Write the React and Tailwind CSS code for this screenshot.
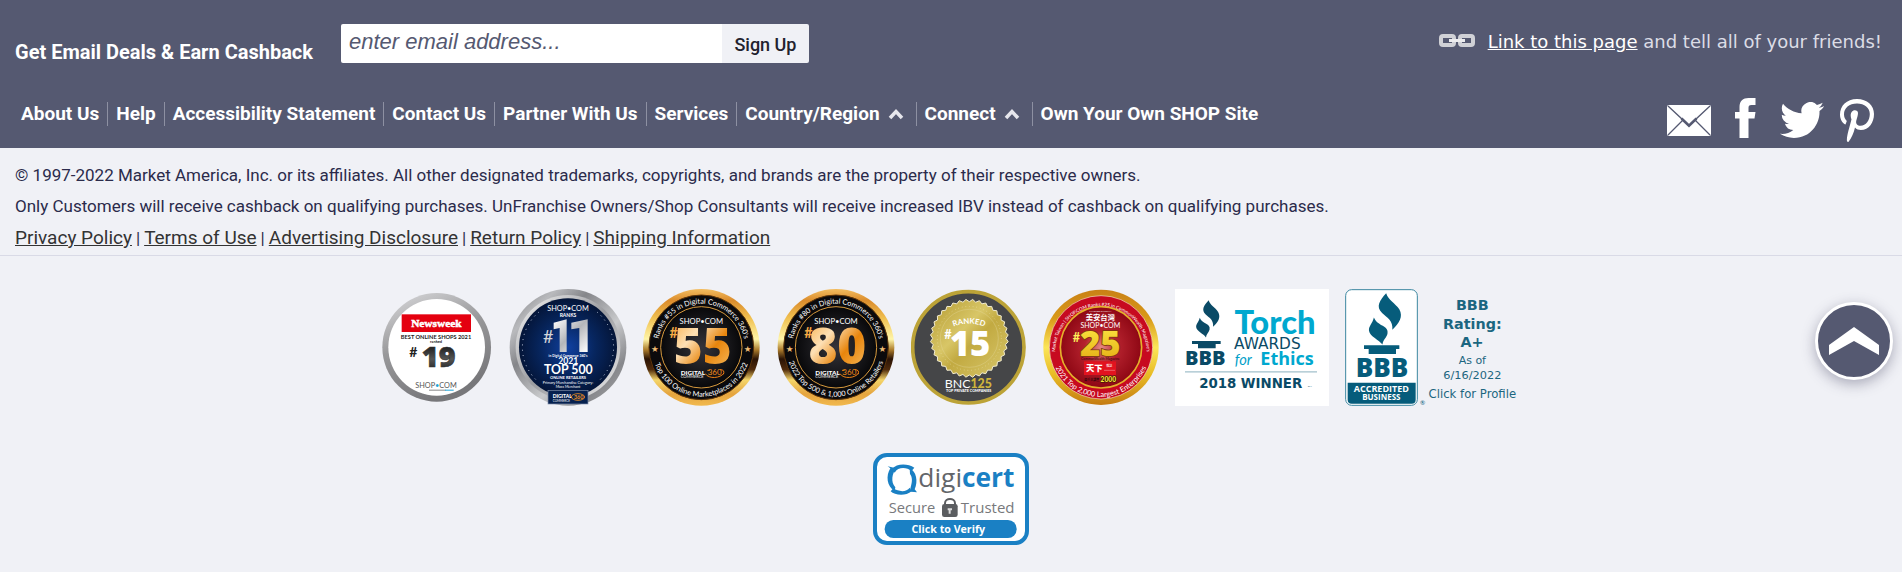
import React from 'react';

const navItems = [
  { label: 'About Us' },
  { label: 'Help' },
  { label: 'Accessibility Statement' },
  { label: 'Contact Us' },
  { label: 'Partner With Us' },
  { label: 'Services' },
  { label: 'Country/Region', menu: true },
  { label: 'Connect', menu: true },
  { label: 'Own Your Own SHOP Site' },
];

const legalLinks = ['Privacy Policy', 'Terms of Use', 'Advertising Disclosure', 'Return Policy', 'Shipping Information'];

const lato = 'Lato, sans-serif';
const openSans = "'Open Sans', sans-serif";
const dejaVu = "'DejaVu Sans', sans-serif";
const chinese = "'Noto Sans CJK TC', sans-serif";

function T({ x, y, s, f, w, font, a, children, ...rest }) {
  return (
    <text x={x} y={y} fontSize={s} fill={f || '#fff'} fontWeight={w || 400} fontFamily={font || lato} textAnchor={a || 'middle'} {...rest}>
      {children}
    </text>
  );
}

function Newsweek() {
  return (
    <svg role="img" aria-label="Newsweek best online shops" className="h-[118px] w-[112px]" viewBox="30 24 336 354">
      <defs>
        <linearGradient id="nwRing" x1="0" y1="0" x2="0.4" y2="1">
          <stop offset="0" stopColor="#dcdcde" />
          <stop offset="0.5" stopColor="#98989a" />
          <stop offset="1" stopColor="#77777a" />
        </linearGradient>
        <linearGradient id="nwNum" x1="0" y1="0" x2="0" y2="1">
          <stop offset="0.2" stopColor="#111" />
          <stop offset="0.6" stopColor="#555" />
          <stop offset="1" stopColor="#111" />
        </linearGradient>
      </defs>
      <circle cx="197" cy="199" r="163" fill="url(#nwRing)" />
      <circle cx="197" cy="199" r="145" fill="#fff" />
      <rect x="92" y="100" width="208" height="53" fill="#e4000f" />
      <T x={196} y={137} s={34} w={900} font="'Liberation Serif', serif" stroke="#fff" strokeWidth="1.5">Newsweek</T>
      <T x={195} y={173} s={17} f="#222" w={700}>BEST ONLINE SHOPS 2021</T>
      <T x={195} y={187} s={12} f="#222" w={700}>ranked</T>
      <T x={127} y={228} s={42} f="#222" w={700}>#</T>
      <T x={203} y={257} s={86} f="url(#nwNum)" w={800} font={openSans} stroke="#333" strokeWidth="2">19</T>
      <T x={195} y={321} s={22} f="#555">SHOP<tspan fill="#1aa3d8">•</tspan>COM</T>
      <rect x="174" y="326" width="50" height="3" fill="#888" />
      <rect x="222" y="326" width="26" height="3" fill="#1aa3d8" />
    </svg>
  );
}

function TopFiveHundred() {
  return (
    <svg role="img" aria-label="Top 500 online retailers" className="h-[118px] w-[118px]" viewBox="418 24 354 354">
      <defs>
        <linearGradient id="tfRing" x1="0" y1="0" x2="1" y2="1">
          <stop offset="0" stopColor="#77787c" />
          <stop offset="0.2" stopColor="#b9babd" />
          <stop offset="0.35" stopColor="#85868a" />
          <stop offset="0.6" stopColor="#c9cacc" />
          <stop offset="0.8" stopColor="#87888c" />
          <stop offset="1" stopColor="#aaa" />
        </linearGradient>
        <linearGradient id="tfInner" x1="0" y1="0" x2="1" y2="1">
          <stop offset="0" stopColor="#f6f6f6" />
          <stop offset="0.5" stopColor="#9b9ca0" />
          <stop offset="1" stopColor="#eee" />
        </linearGradient>
        <radialGradient id="tfBlue">
          <stop offset="0" stopColor="#1040a0" />
          <stop offset="0.55" stopColor="#07265f" />
          <stop offset="1" stopColor="#041538" />
        </radialGradient>
        <linearGradient id="tfNum" x1="0" y1="0" x2="1" y2="1">
          <stop offset="0" stopColor="#fff" />
          <stop offset="0.5" stopColor="#b4b6ba" />
          <stop offset="1" stopColor="#fff" />
        </linearGradient>
      </defs>
      <circle cx="595" cy="199" r="175" fill="url(#tfRing)" />
      <circle cx="595" cy="199" r="157" fill="url(#tfInner)" />
      <circle cx="595" cy="199" r="147" fill="url(#tfBlue)" />
      <path d="M508 93 A137 137 0 0 0 503 300 M682 93 A137 137 0 0 1 687 300" fill="none" stroke="#c3cde0" strokeWidth="3" strokeDasharray="3 13" />
      <T x={595} y={90} s={22}>SHOP•COM</T>
      <T x={595} y={107} s={15} w={700}>RANKS</T>
      <T x={536} y={187} s={54} f="#d5d6d9">#</T>
      <path d="M552 125 L591 115 V213 H570 V141 L552 145Z M605 125 L654 115 V213 H629 V141 L605 145Z" fill="url(#tfNum)" />
      <T x={595} y={227} s={10} w={700}>in Digital Commerce 360's</T>
      <T x={596} y={249} s={26} w={700}>2021</T>
      <T x={596} y={280} s={37} w={700}>TOP 500</T>
      <T x={595} y={295} s={12} w={700}>ONLINE RETAILERS</T>
      <T x={595} y={308} s={11}>Primary Merchandise Category:</T>
      <T x={595} y={320} s={11}>Mass Merchant</T>
      <rect x="535" y="328" width="120" height="41" fill="#06204e" stroke="#8290aa" strokeWidth="2" />
      <T x={549} y={351} s={15} w={900} a="start">DIGITAL</T>
      <T x={549} y={362} s={9} a="start">COMMERCE</T>
      <T x={627} y={354} s={16} f="#f09020" w={700}>360</T>
      <ellipse cx="625" cy="348" rx="20" ry="10" fill="none" stroke="#f09020" strokeWidth="2.5" />
    </svg>
  );
}

function GoldBadge({ id, left, cx, num, top, bottom }) {
  return (
    <svg role="img" aria-label={'Digital Commerce 360 rank ' + num} className="h-[118px] w-[118px]" viewBox={left + ' 24 354 354'}>
      <defs>
        <linearGradient id={id + 'r'} x1="0" y1="0" x2="0" y2="1">
          <stop offset="0" stopColor="#f3bd60" />
          <stop offset="0.1" stopColor="#db8c2c" />
          <stop offset="0.25" stopColor="#f0c050" />
          <stop offset="0.43" stopColor="#fff5a8" />
          <stop offset="0.52" stopColor="#ad7d2d" />
          <stop offset="0.6" stopColor="#2a1305" />
          <stop offset="0.69" stopColor="#4f2b0c" />
          <stop offset="0.78" stopColor="#f4d56a" />
          <stop offset="0.9" stopColor="#e5a43e" />
          <stop offset="1" stopColor="#f1b94e" />
        </linearGradient>
        <linearGradient id={id + 'n'} x1="0" y1="0" x2="1" y2="1">
          <stop offset="0" stopColor="#f7a433" />
          <stop offset="0.35" stopColor="#fde0b5" />
          <stop offset="0.62" stopColor="#e8850c" />
          <stop offset="1" stopColor="#f9c46d" />
        </linearGradient>
        <radialGradient id={id + 'b'}>
          <stop offset="0" stopColor="#35343a" />
          <stop offset="1" stopColor="#08080a" />
        </radialGradient>
        <path id={id + 't'} d={`M${cx - 131} 199 A131 131 0 0 1 ${cx + 131} 199`} />
        <path id={id + 'u'} d={`M${cx - 148} 199 A148 148 0 0 0 ${cx + 148} 199`} />
      </defs>
      <circle cx={cx} cy="199" r="175" fill={`url(#${id}r)`} />
      <circle cx={cx} cy="199" r="157" fill="#0b0a0c" stroke="#5d3409" strokeWidth="3" />
      <circle cx={cx} cy="199" r="122" fill={`url(#${id}b)`} stroke="#d79a3e" strokeWidth="3" />
      <text fontSize="22" fill="#fff" fontFamily={lato} textAnchor="middle">
        <textPath href={`#${id}t`} startOffset="50%">{top}</textPath>
      </text>
      <text fontSize="22" fill="#fff" fontFamily={lato} textAnchor="middle">
        <textPath href={`#${id}u`} startOffset="50%">{bottom}</textPath>
      </text>
      <T x={cx - 139} y={214} s={26} f="#f0bd74" font={dejaVu}>★</T>
      <T x={cx + 139} y={214} s={26} f="#f0bd74" font={dejaVu}>★</T>
      <T x={cx} y={129} s={23}>SHOP•COM</T>
      <T x={cx - 83} y={172} s={43} f="#f6aa45" w={700}>#</T>
      <T x={cx + 4} y={249} s={148} f={`url(#${id}n)`} w={800} font={openSans}>{num}</T>
      <T x={cx - 62} y={281} s={19} w={900} a="start">DIGITAL</T>
      <T x={cx - 62} y={292} s={12} a="start">COMMERCE</T>
      <T x={cx + 40} y={282} s={24} f="#f08a18">360</T>
      <path d={`M${cx + 12} 278 C${cx + 22} 295 ${cx + 58} 292 ${cx + 68} 276 M${cx + 18} 268 H${cx + 26} M${cx + 56} 266 Q${cx + 72} 266 ${cx + 66} 280`} fill="none" stroke="#ee8112" strokeWidth="3" />
    </svg>
  );
}

const scallop = Array.from({ length: 72 }, (_, i) => {
  const a = (i * Math.PI) / 36;
  const r = i % 2 ? 117 : 110;
  return (202 + r * Math.cos(a)).toFixed(1) + ',' + (172 + r * Math.sin(a)).toFixed(1);
}).join(' ');

function BncBadge() {
  return (
    <svg role="img" aria-label="BNC 125 top private companies" className="h-[118px] w-[116px]" viewBox="27 24 348 354">
      <defs>
        <linearGradient id="bncSeal" x1="0" y1="0" x2="1" y2="1">
          <stop offset="0" stopColor="#b49a30" />
          <stop offset="0.4" stopColor="#d8c667" />
          <stop offset="0.55" stopColor="#c2aa41" />
          <stop offset="1" stopColor="#d9c96e" />
        </linearGradient>
        <path id="bncArc" d="M141 143 Q201 113 261 143" />
      </defs>
      <circle cx="199" cy="199" r="167" fill="#454648" stroke="#bca337" strokeWidth="11" />
      <polygon points={scallop} fill="url(#bncSeal)" stroke="#f2ecd0" strokeWidth="3" strokeLinejoin="round" />
      <circle cx="202" cy="172" r="87" fill="none" stroke="#e6dba0" strokeWidth="1" />
      <circle cx="202" cy="172" r="96" fill="none" stroke="#eee5b4" strokeWidth="2" strokeDasharray="2 9" />
      <text fontSize="23" fontWeight="700" fill="#fff" fontFamily={lato} textAnchor="middle">
        <textPath href="#bncArc" startOffset="50%">RANKED</textPath>
      </text>
      <T x={138} y={174} s={38} w={700}>#</T>
      <T x={204} y={225} s={104} w={800} font={openSans}>15</T>
      <T x={199} y={320} s={37}>BNC<tspan fill="#d0b53c" fontWeight="900">125</tspan></T>
      <T x={200} y={332} s={11} w={900}>TOP PRIVATE COMPANIES</T>
    </svg>
  );
}

function RedBadge() {
  return (
    <svg role="img" aria-label="Top 2,000 largest enterprises" className="h-[118px] w-[116px]" viewBox="426 24 348 354">
      <defs>
        <linearGradient id="redRing" x1="0" y1="0" x2="0" y2="1">
          <stop offset="0" stopColor="#c98116" />
          <stop offset="0.25" stopColor="#d99a18" />
          <stop offset="0.5" stopColor="#fbe558" />
          <stop offset="0.75" stopColor="#e7b923" />
          <stop offset="1" stopColor="#c47a12" />
        </linearGradient>
        <radialGradient id="redFill">
          <stop offset="0" stopColor="#e58a83" />
          <stop offset="0.4" stopColor="#b5222e" />
          <stop offset="1" stopColor="#8e0714" />
        </radialGradient>
        <linearGradient id="redNum" x1="0" y1="0" x2="0" y2="1">
          <stop offset="0" stopColor="#ffed48" />
          <stop offset="1" stopColor="#e2a910" />
        </linearGradient>
        <path id="redTop" d="M463 212 A137 137 0 1 1 737 212" />
        <path id="redBot" d="M451 199 A149 149 0 0 0 749 199" />
      </defs>
      <circle cx="600" cy="199" r="173" fill="url(#redRing)" />
      <circle cx="600" cy="199" r="155" fill="#c70a20" stroke="#f2e6c2" strokeWidth="2" />
      <circle cx="600" cy="199" r="122" fill="url(#redFill)" stroke="#e4b02c" strokeWidth="5" />
      <text fontSize="14" fill="#fff" fontFamily={lato} textAnchor="middle">
        <textPath href="#redTop" startOffset="50%">Market Taiwan | SHOP.COM Ranks #25 in CommonWealth Magazine's</textPath>
      </text>
      <text fontSize="22" fill="#fff" fontFamily={lato} textAnchor="middle">
        <textPath href="#redBot" startOffset="50%">2021 Top 2,000 Largest Enterprises</textPath>
      </text>
      <T x={598} y={93} s={8}>MARKET TAIWAN</T>
      <T x={598} y={117} s={22} w={700} font={chinese}>美安台灣</T>
      <T x={598} y={141} s={21}>SHOP•COM</T>
      <T x={526} y={182} s={38} f="#fff05a" w={700}>#</T>
      <T x={598} y={225} s={104} f="url(#redNum)" w={800} font={openSans} stroke="#7a3a0c" strokeWidth="5" paintOrder="stroke">25</T>
      <T x={598} y={238} s={10} f="#2c0609">CommonWealth Magazine</T>
      <rect x="549" y="241" width="96" height="41" fill="#e2131f" />
      <T x={580} y={271} s={25} w={900} font={chinese}>天下</T>
      <T x={625} y={259} s={9} font={chinese}>雜誌</T>
      <path d="M609 268 H642" stroke="#fff" strokeWidth="1" />
      <T x={572} y={301} s={9} f="#26070a" w={700} font={chinese}>兩千大調查</T>
      <T x={622} y={303} s={20} f="#ffe53b" w={900} stroke="#2a1a00" strokeWidth="3" paintOrder="stroke">2000</T>
    </svg>
  );
}

function Flame({ transform }) {
  return (
    <g transform={transform}>
      <path d="M46 0 C51 17 68 24 78 39 C88 57 78 73 61 89 C63 66 49 60 36 48 C20 33 30 17 46 0Z" />
      <path d="M16 59 C25 81 54 78 49 99 C46 109 38 113 37 125 C29 113 6 105 4 91 C3 80 12 75 16 59Z" />
    </g>
  );
}

function Torch() {
  return (
    <svg role="img" aria-label="BBB Torch Awards for Ethics 2018 winner" className="h-[117px] w-[154px]" viewBox="27 24 462 351">
      <rect x="27" y="24" width="462" height="351" fill="#fff" />
      <g fill="#0a4a66">
        <Flame transform="translate(87 58) scale(0.89)" />
        <path d="M78 180 H164 V189 H149 V202 H96 V189 H78Z" />
      </g>
      <T x={118} y={253} s={60} f="#0a4a66" w={800} font={openSans}>BBB</T>
      <T x={327} y={160} s={98} f="#00a8cf" w={900}>Torch</T>
      <T x={204} y={204} s={46} f="#0a4a66" a="start" font={dejaVu}>AWARDS</T>
      <T x={206} y={251} s={44} f="#00a0c8" a="start" fontStyle="italic">for</T>
      <T x={283} y={253} s={54} f="#00a8cf" w={700} a="start" font={openSans}>Ethics</T>
      <rect x="57" y="270" width="396" height="5" fill="#b9d0d8" />
      <T x={254} y={320} s={40} f="#0a4a66" w={700} font={dejaVu}>2018 WINNER</T>
      <T x={431} y={319} s={8} f="#0a4a66">SM</T>
    </svg>
  );
}

function Accredited() {
  return (
    <svg role="img" aria-label="BBB accredited business" className="h-[118px] w-[177px]" viewBox="537 24 531 354">
      <rect x="539" y="26" width="215" height="347" rx="18" fill="#fff" stroke="#3c87a0" strokeWidth="3" />
      <path d="M545 305 H749 V356 Q749 368 737 368 H557 Q545 368 545 356Z" fill="#065c7b" />
      <g fill="#065c7b">
        <Flame transform="translate(604 37) scale(1.23)" />
        <path d="M594 193 H700 V204 H690 V219 H608 V204 H594Z" />
      </g>
      <T x={648} y={287} s={78} f="#065c7b" w={800} font={openSans}>BBB</T>
      <T x={646} y={333} s={27} w={700} font={openSans}>ACCREDITED</T>
      <T x={646} y={357} s={24} w={700} font={openSans}>BUSINESS</T>
      <T x={770} y={372} s={19} f="#065c7b">®</T>
      <T x={919} y={87} s={43} f="#1b6680" w={700} font={dejaVu}>BBB</T>
      <T x={919} y={143} s={43} f="#1b6680" w={700} font={dejaVu}>Rating:</T>
      <T x={918} y={199} s={43} f="#1b6680" w={700} font={dejaVu}>A+</T>
      <T x={919} y={250} s={33} f="#1b6680" font={dejaVu}>As of</T>
      <T x={919} y={293} s={34} f="#1b6680" font={dejaVu}>6/16/2022</T>
      <T x={919} y={352} s={35} f="#1b6680" font={dejaVu}>Click for Profile</T>
    </svg>
  );
}

function Digicert() {
  return (
    <svg role="img" aria-label="DigiCert secure and trusted" className="h-[92px] w-[156px]" viewBox="36 36 468 276">
      <rect x="42" y="42" width="456" height="264" rx="36" fill="#fff" stroke="#1a80c4" strokeWidth="12" />
      <g fill="#1a80c4">
        <path d="M93 83 C107 67 140 66 160 80 L151 91 C138 78 111 77 101 95 Z" />
        <path d="M146 82 C166 91 172 121 161 145 L168 154 L150 152 C142 145 162 119 147 99 Z" />
        <path d="M152 151 C133 167 101 163 89 151 L97 142 C113 153 137 154 146 140 Z" />
        <path d="M101 150 C77 136 74 105 88 82 L80 76 L105 82 C94 98 88 122 103 139 Z" />
      </g>
      <T x={172} y={139} s={79} f="#63666a" a="start" font={openSans}>digi<tspan fill="#1a80c4" fontWeight="700">cert</tspan></T>
      <T x={153} y={216} s={44} f="#77797c" font={openSans}>Secure</T>
      <T x={380} y={216} s={45} f="#77797c" font={openSans}>Trusted</T>
      <path d="M252 192 V187 C252 170 282 170 282 187 V192" fill="none" stroke="#5b5d60" strokeWidth="6" />
      <rect x="243" y="189" width="47" height="39" rx="7" fill="#5b5d60" />
      <path d="M260 202 H273 V208 H269 V218 H263 V208 H260Z" fill="#ddd" />
      <rect x="71" y="237" width="396" height="54" rx="26" fill="#1a80c4" />
      <T x={262} y={276} s={32} w={700} font={openSans}>Click to Verify</T>
    </svg>
  );
}

function ChainIcon() {
  return (
    <svg aria-hidden="true" className="h-4 w-[38px]" viewBox="0 0 38 16">
      <g fill="none" stroke="#d0d1d6" strokeWidth="4">
        <rect x="3" y="2" width="13" height="9" rx="2" />
        <rect x="22" y="2" width="13" height="9" rx="2" />
        <path d="M11 6.500 H27" stroke="#ececee" strokeWidth="3" />
      </g>
    </svg>
  );
}

export default function App() {
  return (
    <footer className="min-h-screen bg-[#f0f1f6] font-['Roboto',sans-serif] text-[#2b2b4b]">
      <div className="h-[148px] bg-[#555971] text-white">
        <div className="flex items-start justify-between pt-6 pr-5 pl-[15px]">
          <form className="flex" onSubmit={(e) => e.preventDefault()}>
            <label htmlFor="email" className="mt-4 mr-7 text-[20px] leading-6 font-bold">Get Email Deals &amp; Earn Cashback</label>
            <input
              id="email"
              type="email"
              placeholder="enter email address..."
              className="h-[39px] w-[381px] rounded-l-xs bg-white px-2 pb-1 font-['Liberation_Sans',sans-serif] text-[22px] text-[#555971] italic outline-none placeholder:text-[#555971]"
            />
            <button type="submit" className="h-[39px] w-[87px] rounded-r-xs bg-[#f0f1f6] pt-0.5 text-[18px] font-medium text-[#22222e]">Sign Up</button>
          </form>
          <p className="mt-1 flex items-center font-['DejaVu_Sans',sans-serif] text-[18px] leading-7 text-[#dcdde6]">
            <ChainIcon />
            <span className="ml-3"><a href="#link" className="text-white underline">Link to this page</a> and tell all of your friends!</span>
          </p>
        </div>
        <div className="flex items-start justify-between pr-[27px] pl-[13px]">
          <nav aria-label="Footer" className="mt-[38px] flex">
            {navItems.map((item, i) => (
              <a
                key={item.label}
                href="#nav"
                className={'flex h-6 items-center px-2 text-[19px] leading-6 font-bold whitespace-nowrap ' + (i ? 'border-l border-[#8d90a2]' : '')}
              >
                {item.label}
                {item.menu && (
                  <svg aria-hidden="true" className="mr-1 ml-2 h-3 w-4" viewBox="0 0 16 12">
                    <path d="M2 10 L8 3.500 L14 10" fill="none" stroke="#e6e6ec" strokeWidth="3.500" />
                  </svg>
                )}
              </a>
            ))}
          </nav>
          <div className="mt-[34px] flex items-center">
            <a href="#mail" aria-label="Email" className="mr-6">
              <svg className="h-[31px] w-[44px]" viewBox="0 0 44 31">
                <rect x="0" y="0" width="44" height="31" rx="2" fill="#fff" />
                <path d="M1 1 L22 20.500 L43 1 M1 30 L16 15 M43 30 L28 15" fill="none" stroke="#555971" strokeWidth="1.300" />
                <path d="M14.500 13.500 L22 20.800 L29.500 13.500" fill="none" stroke="#555971" strokeWidth="2.600" />
              </svg>
            </a>
            <a href="#facebook" aria-label="Facebook" className="mr-6 mb-1">
              <svg className="h-10 w-[21px]" viewBox="0 0 21 40">
                <path d="M4.500 40 V20.500 H0 V14 H4.500 V9 C4.500 3 8 0 13.500 0 H20.500 V7 H16.500 C14 7 13.500 8 13.500 10 V14 H20.500 L19.500 20.500 H13.500 V40Z" fill="#fff" />
              </svg>
            </a>
            <a href="#twitter" aria-label="Twitter" className="mr-4">
              <svg className="h-[36px] w-[44px]" viewBox="0 2.200 24 19.600" preserveAspectRatio="none">
                <path fill="#fff" d="M23.953 4.570a10 10 0 01-2.825.775 4.958 4.958 0 002.163-2.723c-.951.555-2.005.959-3.127 1.184a4.920 4.920 0 00-8.384 4.482C7.690 8.095 4.067 6.130 1.640 3.162a4.822 4.822 0 00-.666 2.475c0 1.710.870 3.213 2.188 4.096a4.904 4.904 0 01-2.228-.616v.060a4.923 4.923 0 003.946 4.827 4.996 4.996 0 01-2.212.085 4.936 4.936 0 004.604 3.417 9.867 9.867 0 01-6.102 2.105c-.390 0-.779-.023-1.170-.067a13.995 13.995 0 007.557 2.209c9.053 0 13.998-7.496 13.998-13.985 0-.210 0-.420-.015-.630A9.935 9.935 0 0024 4.590z" />
              </svg>
            </a>
            <a href="#pinterest" aria-label="Pinterest">
              <svg className="h-[43px] w-[35px]" viewBox="0 0 35 43">
                <path fill="#fff" d="M17 0 C6.500 0 0 7 0 15.500 C0 20 2.200 24.300 5.500 25.600 L6.800 22 C5 20.400 4 18 4 15.300 C4 9 9.200 4.400 17 4.400 C24.500 4.400 29.800 8.800 29.800 15 C29.800 21.500 26 26.800 20.500 26.800 C17.500 26.800 15.700 24.700 16.200 22 C17 18.800 18 16.500 18 14 C18 10 10.700 9.800 10.700 16.500 C10.700 18.800 11.500 20.200 11.500 20.200 C8.200 33 6.500 37.500 7 42.500 L8.400 43 C11.800 38.800 13.500 34.500 15 28.600 C16.500 30.500 18.700 31 20.800 31 C29 31 34 23.500 34 15 C34 6.500 27.200 0 17 0Z" />
              </svg>
            </a>
          </div>
        </div>
      </div>

      <div className="border-b border-[#d9dae6] px-[15px] pt-[11px] pb-px">
        <p className="text-[17px] leading-8">© 1997-2022 Market America, Inc. or its affiliates. All other designated trademarks, copyrights, and brands are the property of their respective owners.</p>
        <p className="text-[17px] leading-[31px]">Only Customers will receive cashback on qualifying purchases. UnFranchise Owners/Shop Consultants will receive increased IBV instead of cashback on qualifying purchases.</p>
        <p className="flex items-baseline gap-1 text-[17px] leading-8">
          {legalLinks.map((label, i) => (
            <React.Fragment key={label}>
              {i > 0 && <span>|</span>}
              <a href="#legal" className="text-[19px] text-[#333] underline">{label}</a>
            </React.Fragment>
          ))}
        </p>
      </div>

      <div className="flex flex-wrap justify-center gap-4 pt-[33px]">
        <Newsweek />
        <TopFiveHundred />
        <GoldBadge id="g55" left={24} cx={199} num="55" top="Ranks #55 in Digital Commerce 360's" bottom="Top 100 Online Marketplaces in 2022" />
        <GoldBadge id="g80" left={420} cx={597} num="80" top="Ranks #80 in Digital Commerce 360's" bottom="2022 Top 500 & 1,000 Online Retailers" />
        <BncBadge />
        <RedBadge />
        <Torch />
        <Accredited />
      </div>
      <div className="flex justify-center pt-[46px]">
        <Digicert />
      </div>

      <button type="button" aria-label="Back to top" className="fixed right-[9px] bottom-48 flex size-[78px] items-center justify-center rounded-full border-3 border-white bg-[#555971] shadow-[0_4px_14px_rgba(60,60,90,0.4)]">
        <svg className="h-7 w-[50px]" viewBox="0 0 50 28">
          <path d="M0 18 L25 0 L50 18 V28 L25 14 L0 28Z" fill="#fff" />
        </svg>
      </button>
    </footer>
  );
}
